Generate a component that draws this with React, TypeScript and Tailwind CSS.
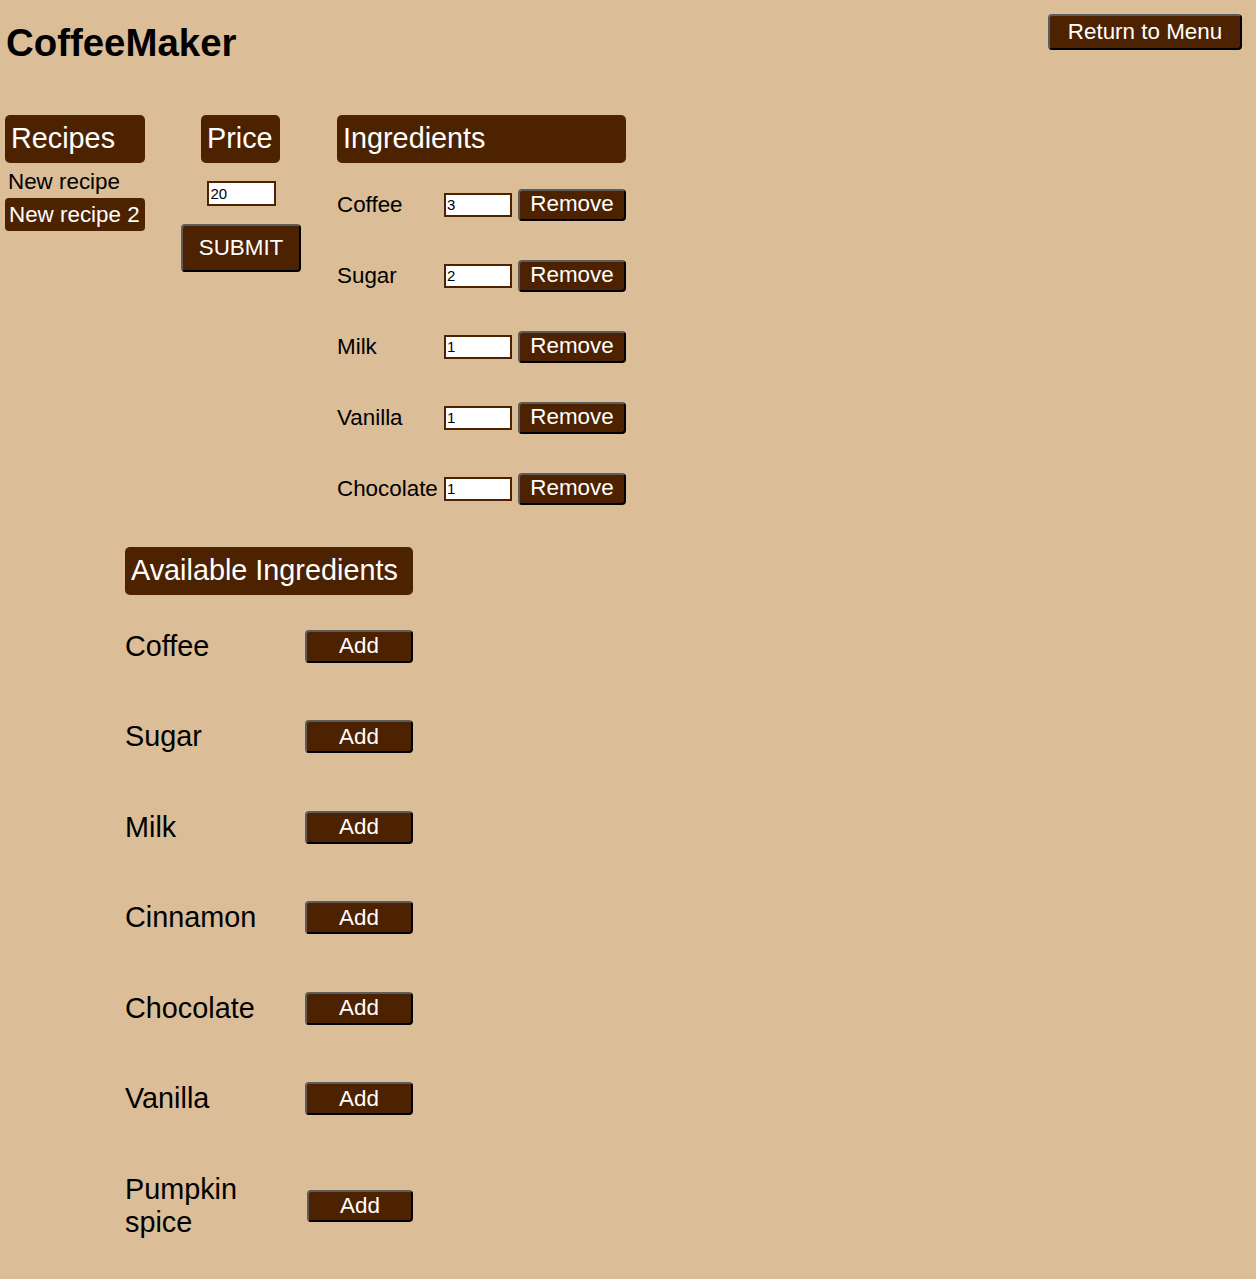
const recipeIngredients = [
  { name: "Coffee", amount: "3" },
  { name: "Sugar", amount: "2" },
  { name: "Milk", amount: "1" },
  { name: "Vanilla", amount: "1" },
  { name: "Chocolate", amount: "1" },
];

const available = ["Coffee", "Sugar", "Milk", "Cinnamon", "Chocolate", "Vanilla", "Pumpkin spice"];

const btn =
  "rounded-[4px] border-2 border-t-[#5c5c5c] border-l-[#5c5c5c] border-r-black border-b-black bg-[#4d2200] text-white text-[22.4px] leading-none";

function Header({ children, className = "" }: { children: React.ReactNode; className?: string }) {
  return (
    <div
      className={
        "flex h-[48px] items-center rounded-[5px] bg-[#4d2200] px-[6px] text-[28.8px] text-white " + className
      }
    >
      {children}
    </div>
  );
}

export default function App() {
  return (
    <div className="min-h-screen bg-[#dbbd97] font-['Liberation_Sans',Arial,sans-serif] text-black">
      <div className="flex items-start justify-between">
        <h1 className="ml-[6px] mt-[21px] text-[38.4px] font-bold leading-[44px]">CoffeeMaker</h1>
        <button className={btn + " mr-[14px] mt-[14px] h-[36px] w-[194px]"}>Return to Menu</button>
      </div>

      <div className="mt-[50px] flex items-start">
        {/* recipes */}
        <div className="ml-[5px] flex w-[140px] flex-col">
          <Header>Recipes</Header>
          <div className="mt-[6px] whitespace-nowrap px-[3px] text-[22.4px] leading-[26px]">New recipe</div>
          <div className="mt-[3px] flex h-[33px] items-center whitespace-nowrap rounded-[4px] bg-[#4d2200] px-[4px] text-[22.4px] text-white">
            New recipe 2
          </div>
        </div>

        {/* price */}
        <div className="ml-[36px] flex w-[120px] flex-col items-center">
          <Header className="-ml-px w-[79px]">Price</Header>
          <input
            defaultValue="20"
            className="mt-[18px] h-[25px] w-[69px] border-2 border-[#4d2200] bg-white px-[2px] text-[15px] outline-none"
          />
          <button className={btn + " mt-[18px] h-[48px] w-[120px]"}>SUBMIT</button>
        </div>

        {/* ingredients */}
        <div className="ml-[36px] flex w-[289px] flex-col">
          <Header>Ingredients</Header>
          <div className="mt-[6px] flex flex-col">
            {recipeIngredients.map((i) => (
              <div key={i.name} className="flex h-[71px] items-center">
                <span className="w-[107px] text-[22.4px]">{i.name}</span>
                <input
                  defaultValue={i.amount}
                  className="h-[24px] w-[68px] border-2 border-[#4d2200] bg-white px-[1px] text-[15px] outline-none"
                />
                <button className={btn + " ml-[6px] h-[32px] w-[108px]"}>Remove</button>
              </div>
            ))}
          </div>
        </div>
      </div>

      <div className="ml-[125px] mt-[23px] flex w-[288px] flex-col pb-[10px]">
        <Header>Available Ingredients</Header>
        <div className="mt-[6px] flex flex-col">
          {available.map((name) => (
            <div key={name} className="flex items-center py-[28.75px]">
              <span className="w-[180px] text-[28.8px] leading-[33px]">
                {name === "Pumpkin spice" ? (
                  <>
                    Pumpkin
                    <br />
                    spice
                  </>
                ) : (
                  name
                )}
              </span>
              <button
                className={
                  btn +
                  (name === "Pumpkin spice" ? " ml-[2px] h-[32px] w-[106px]" : " h-[33px] w-[108px]")
                }
              >
                Add
              </button>
            </div>
          ))}
        </div>
      </div>
    </div>
  );
}
